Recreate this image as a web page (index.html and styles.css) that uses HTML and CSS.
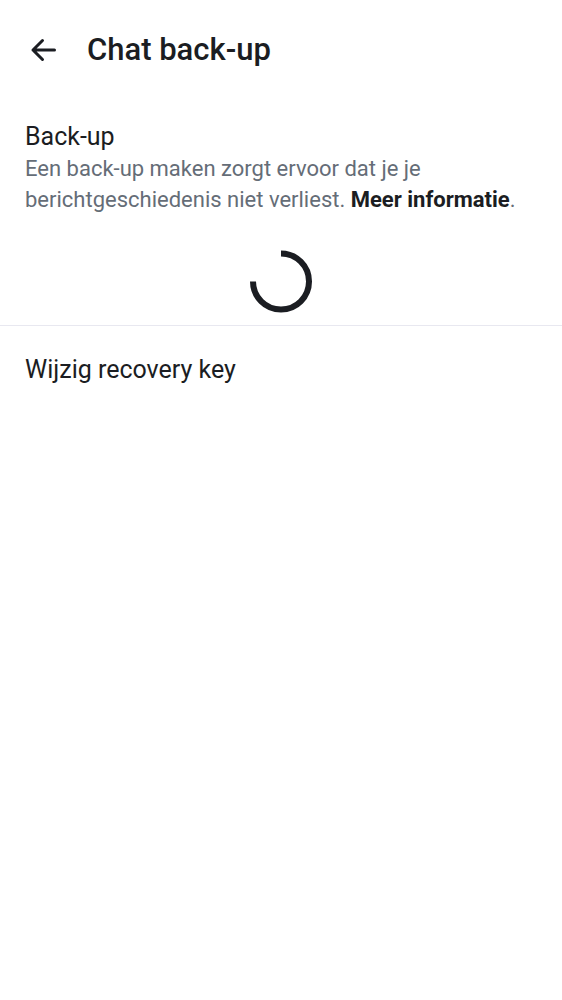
FILE: index.html
```html
<!DOCTYPE html>
<html lang="nl">
<head>
<meta charset="utf-8">
<meta name="viewport" content="width=device-width, initial-scale=1">
<title>Chat back-up</title>
<link rel="stylesheet" href="styles.css">
</head>
<body>
<header class="top-bar">
  <button class="back" type="button" aria-label="Terug">
    <svg class="back-icon" viewBox="0 0 26 26" aria-hidden="true"><path d="M12.500 3.500 3 13 12.500 22.500M3 13H24.500"/></svg>
  </button>
  <h1 class="title">Chat back-up</h1>
</header>
<main>
  <section class="backup">
    <h2 class="item-title">Back-up</h2>
    <p class="description">Een back-up maken zorgt ervoor dat je je berichtgeschiedenis niet verliest. <a class="more" href="#">Meer informatie</a>.</p>
    <div class="progress" role="progressbar" aria-label="Laden">
      <svg class="spinner" viewBox="0 0 62 62" aria-hidden="true"><path d="M31 3A28 28 0 1 1 3 31"/></svg>
    </div>
  </section>
  <button class="row" type="button">Wijzig recovery key</button>
</main>
</body>
</html>
```

FILE: styles.css
```css
* { box-sizing: border-box; }
body {
  margin: 0;
  background: #fff;
  color: #1b1d22;
  font-family: Roboto, sans-serif;
}
button {
  border: 0;
  padding: 0;
  background: none;
  color: inherit;
  font: inherit;
  cursor: pointer;
}
.top-bar {
  display: flex;
  align-items: center;
  gap: 24px;
  height: 100px;
  padding: 0 23px;
}
.back {
  display: flex;
  align-items: center;
  justify-content: center;
  width: 40px;
  height: 40px;
}
.back-icon {
  width: 26px;
  height: 26px;
  fill: none;
  stroke: currentColor;
  stroke-width: 3;
  stroke-linecap: round;
  stroke-linejoin: round;
}
.title {
  margin: 0;
  font-size: 31px;
  line-height: 40px;
  font-weight: 500;
}
.backup {
  padding: 20px 25px 12px;
  border-bottom: 1px solid #e8e8f0;
}
.item-title {
  margin: 0;
  font-size: 25px;
  line-height: 33px;
  font-weight: 400;
}
.description {
  margin: 0;
  color: #656d77;
  font-size: 22px;
  line-height: 31px;
}
.more {
  color: #1b1d22;
  font-weight: 700;
  text-decoration: none;
}
.progress {
  display: flex;
  justify-content: center;
  padding-top: 35px;
}
.spinner {
  width: 62px;
  height: 63px;
  fill: none;
  stroke: #1b1d22;
  stroke-width: 6;
}
.row {
  display: block;
  width: 100%;
  padding: 28px 25px;
  text-align: left;
  font-size: 25px;
  line-height: 32px;
}
```
